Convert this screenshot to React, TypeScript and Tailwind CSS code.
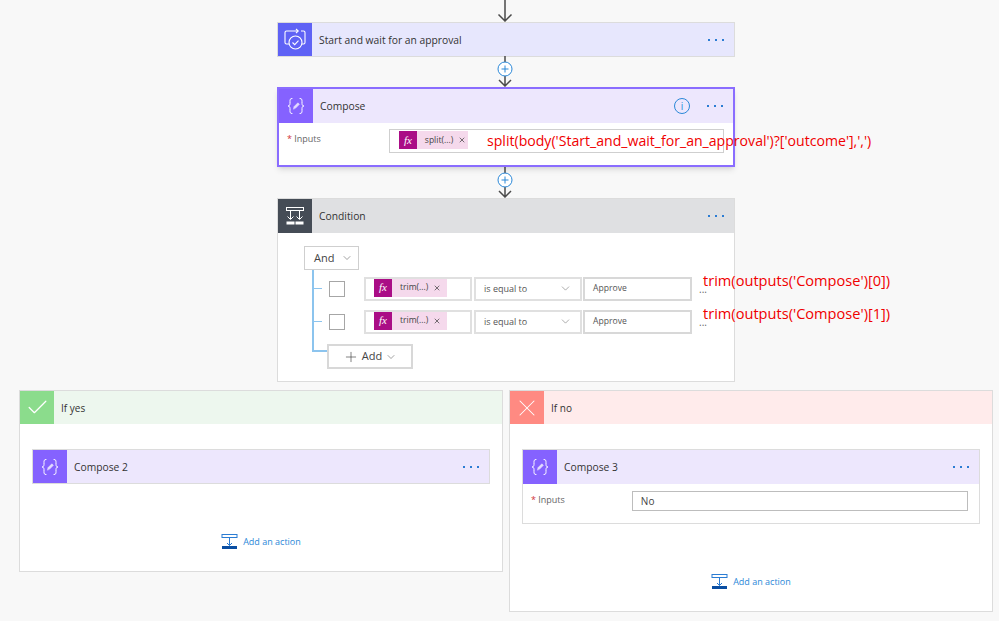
import type { ReactNode } from 'react';
import { Check, ChevronDown, Plus, X } from 'lucide-react';

// Small drawings used by the flow cards
function ComposeIcon() {
  return (
    <svg width="20" height="20" viewBox="0 0 20 20" fill="none" stroke="white" strokeWidth="1" strokeLinecap="round">
      <path d="M6 2.500c-2 0-2 1-2 3v2c0 1.500-.7 2.500-2 2.500 1.300 0 2 1 2 2.500v2c0 2 0 3 2 3" />
      <path d="M14 2.500c2 0 2 1 2 3v2c0 1.500.7 2.500 2 2.500-1.300 0-2 1-2 2.500v2c0 2 0 3-2 3" />
      <path d="M7.500 12.800l.6-2.200 3.800-3.800 1.500 1.500-3.800 3.800z" fill="#e4dcff" stroke="#e4dcff" strokeWidth=".6" />
    </svg>
  );
}

function ApprovalIcon() {
  return (
    <svg width="24" height="24" viewBox="0 0 24 24" fill="none" stroke="white" strokeWidth="1.100">
      <path d="M6 16H3.500A1.500 1.500 0 0 1 2 14.500v-10A1.500 1.500 0 0 1 3.500 3H15" />
      <path d="M13 1l2.200 2L13 5" />
      <path d="M18 3h2.500A1.500 1.500 0 0 1 22 4.500v10a1.500 1.500 0 0 1-1.500 1.500H19" />
      <circle cx="12.500" cy="14.500" r="6.500" />
      <path d="M9.500 14.500l2.200 2.200 3.800-4" />
    </svg>
  );
}

function ConditionIcon() {
  return (
    <svg width="20" height="20" viewBox="0 0 20 20" fill="none" stroke="white" strokeWidth="1">
      <rect x="1.500" y="1.500" width="17" height="3" />
      <path d="M5.500 4.500V13M14.500 4.500V13" />
      <path d="M2.500 10.500l3 3 3-3M11.500 10.500l3 3 3-3" />
      <path d="M1.500 15.500h8v3h-8zM10.500 15.500h8v3h-8z" fill="white" stroke="none" />
    </svg>
  );
}

function AddActionIcon() {
  return (
    <svg width="17" height="17" viewBox="0 0 17 17" fill="none">
      <rect x="1" y="1.500" width="15" height="3" stroke="#2b7cd3" />
      <path d="M8.500 4.500v8M6 10l2.500 2.500L11 10" stroke="#2b7cd3" />
      <rect x="1" y="13" width="15" height="3" fill="#0a4ea2" />
    </svg>
  );
}

function Arrow() {
  return (
    <svg width="16" height="22" viewBox="0 0 16 22" fill="none" stroke="#4a4a4a" strokeWidth="1.500">
      <path d="M8 0v21M1.500 14.500L8 21l6.500-6.500" />
    </svg>
  );
}

function Connector(props: { height: string }) {
  return (
    <div className={`flex justify-center items-end pr-[2px] ${props.height}`}>
      <svg width="18" height="31" viewBox="0 0 18 31" fill="none">
        <path d="M9 0v30M3 24l6 6 6-6" stroke="#4a4a4a" strokeWidth="1.500" />
        <circle cx="9" cy="13" r="7" fill="white" stroke="#2b88d8" />
        <path d="M5.500 13h7M9 9.500v7" stroke="#2b88d8" />
      </svg>
    </div>
  );
}

function Dots() {
  return (
    <div className="flex gap-[5px]">
      <span className="w-[2px] h-[2px] bg-[#2b7cd3]" />
      <span className="w-[2px] h-[2px] bg-[#2b7cd3]" />
      <span className="w-[2px] h-[2px] bg-[#2b7cd3]" />
    </div>
  );
}

function CardHeader(props: { icon: ReactNode; iconBg: string; bg: string; title: string; extra?: ReactNode }) {
  return (
    <div className={`flex items-center h-[34px] ${props.bg}`}>
      <div className={`flex items-center justify-center w-[34px] h-full shrink-0 ${props.iconBg}`}>{props.icon}</div>
      <span className="ml-[7px] mt-[2px] text-[10.300px] text-[#333] grow">{props.title}</span>
      {props.extra}
      <div className="mr-[10px] ml-[12px]">
        <Dots />
      </div>
    </div>
  );
}

function FxChip(props: { label: string; width: string }) {
  return (
    <div className={`flex items-center h-[18px] bg-[#f5d9ec] ${props.width}`}>
      <div className="flex items-center justify-center w-[18px] h-full bg-[#aa0d86] text-white text-[11px] italic font-['Liberation_Serif',serif]">
        fx
      </div>
      <span className="ml-2 text-[8.500px] text-[#444]">{props.label}</span>
      <X size={8} className="ml-[5px] text-[#333]" />
    </div>
  );
}

function ConditionRow(props: { note: string }) {
  return (
    <div className="relative flex items-center h-[25px]">
      <span className="w-[8px] h-[1px] bg-[#8cc4ee] ml-[2px]" />
      <span className="ml-[7px] w-[16px] h-[16px] bg-white border border-[#a6a6a6]" />
      <div className="ml-[19px] flex items-start w-[108px] h-[24px] pl-[8px] border-2 border-[#e0e0e0]">
        <FxChip label="trim(...)" width="w-[73px]" />
      </div>
      <div className="ml-[2px] flex items-center justify-between w-[108px] h-[24px] pl-2 pr-2 border-2 border-[#e0e0e0] text-[9px] text-[#555]">
        <span>is equal to</span>
        <ChevronDown size={13} strokeWidth={1} className="text-[#666]" />
      </div>
      <div className="ml-[1px] flex items-center w-[109px] h-[24px] pl-2 border-2 border-[#d8d8d8] text-[8.600px] text-[#555]">
        Approve
      </div>
      <span className="ml-[7px] text-[10px] leading-none text-[#666]">...</span>
      <span className="absolute left-[391px] -top-[6px] whitespace-nowrap text-[14.600px] font-medium text-[#f00000]">
        {props.note}
      </span>
    </div>
  );
}

function AddAction() {
  return (
    <div className="flex items-center justify-center">
      <AddActionIcon />
      <span className="ml-[5px] text-[9px] text-[#2b88d8]">Add an action</span>
    </div>
  );
}

function Branch(props: { height: string; bg: string; iconBg: string; icon: ReactNode; title: string; children: ReactNode }) {
  return (
    <div className={`bg-white border border-[#dcdcdc] w-[484px] ${props.height}`}>
      <div className={`flex items-center h-[33px] ${props.bg}`}>
        <div className={`flex items-center justify-center w-[34px] h-full ${props.iconBg}`}>{props.icon}</div>
        <span className="ml-[7px] mt-[2px] text-[10px] text-[#333]">{props.title}</span>
      </div>
      {props.children}
    </div>
  );
}

export default function App() {
  return (
    <div className="w-[999px] h-[621px] overflow-hidden bg-[#f8f8f8] font-['Open_Sans',sans-serif]">
      <div className="w-[458px] ml-[277px]">
        <div className="flex justify-center pr-[2px] h-[22px]">
          <Arrow />
        </div>

        <div className="h-[35px] overflow-hidden border border-[#dcdcdc]">
          <CardHeader icon={<ApprovalIcon />} iconBg="bg-[#5f62f5]" bg="bg-[#e7e7fd]" title="Start and wait for an approval" />
        </div>
        <Connector height="h-[30px]" />

        <div className="relative h-[80px] bg-white border-2 border-[#8a6dff] shadow-md">
          <CardHeader
            icon={<ComposeIcon />}
            iconBg="bg-[#8562ff]"
            bg="bg-[#ede7fd]"
            title="Compose"
            extra={
              <div className="flex items-center justify-center w-[16px] h-[16px] mr-[5px] rounded-full border border-[#2b88d8] text-[10px] leading-none text-[#2b88d8]">
                i
              </div>
            }
          />
          <div className="flex items-start pt-[6px]">
            <span className="ml-[8px] mt-[3px] text-[9px] text-[#666]">
              <span className="text-[#d13438]">* </span>Inputs
            </span>
            <div className="ml-[68px] flex items-start w-[335px] h-[24px] pl-[9px] pt-[1px] border border-[#cfcfcf]">
              <FxChip label="split(...)" width="w-[69px]" />
            </div>
          </div>
          <span className="absolute left-[208px] top-[41px] whitespace-nowrap text-[14.100px] font-medium text-[#f00000]">
            split(body('Start_and_wait_for_an_approval')?['outcome'],',')
          </span>
        </div>
        <Connector height="h-[31px]" />

        <div className="h-[184px] bg-white border border-[#dcdcdc]">
          <CardHeader icon={<ConditionIcon />} iconBg="bg-[#454c56]" bg="bg-[#dfe0e2]" title="Condition" />
          <div className="pl-[26px] pt-[13px]">
            <div className="flex items-center gap-[7px] pl-[9px] w-[55px] h-[24px] border border-[#cfcfcf] text-[11px] text-[#444]">
              And
              <ChevronDown size={12} strokeWidth={1} />
            </div>
            <div className="ml-[8px] w-[16px] h-[82px] -mb-[82px] border-l-2 border-b-2 border-[#8cc4ee]" />
            <div className="ml-[8px] mt-[6px] flex flex-col gap-[8px]">
              <ConditionRow note="trim(outputs('Compose')[0])" />
              <ConditionRow note="trim(outputs('Compose')[1])" />
            </div>
            <div className="relative flex items-center justify-center gap-[3px] ml-[23px] mt-[10px] w-[86px] h-[25px] bg-white border-2 border-[#d8d8d8] text-[11px] font-medium text-[#444]">
              <Plus size={16} strokeWidth={1} />
              Add
              <ChevronDown size={12} strokeWidth={1} />
            </div>
          </div>
        </div>
      </div>

      <div className="flex items-start gap-[6px] ml-[19px] mt-[8px]">
        <Branch
          height="h-[182px]"
          bg="bg-[#edf7ee]"
          iconBg="bg-[#8bdc8c]"
          icon={<Check size={25} strokeWidth={1.200} color="white" />}
          title="If yes"
        >
          <div className="mx-[12px] mt-[25px] h-[35px] overflow-hidden border border-[#dcdcdc]">
            <CardHeader icon={<ComposeIcon />} iconBg="bg-[#8562ff]" bg="bg-[#ede7fd]" title="Compose 2" />
          </div>
          <div className="mt-[49px]">
            <AddAction />
          </div>
        </Branch>
        <Branch
          height="h-[222px]"
          bg="bg-[#ffebeb]"
          iconBg="bg-[#ff8a82]"
          icon={<X size={28} strokeWidth={0.900} color="white" />}
          title="If no"
        >
          <div className="mx-[12px] mt-[25px] h-[75px] bg-white border border-[#dcdcdc]">
            <CardHeader icon={<ComposeIcon />} iconBg="bg-[#8562ff]" bg="bg-[#ede7fd]" title="Compose 3" />
            <div className="flex items-start pt-[7px]">
              <span className="ml-[8px] mt-[2px] text-[9px] text-[#666]">
                <span className="text-[#d13438]">* </span>Inputs
              </span>
              <div className="ml-[67px] flex items-center w-[336px] h-[20px] pl-2 border border-[#bdbdbd] text-[10px] text-[#444]">
                No
              </div>
            </div>
          </div>
          <div className="mt-[49px]">
            <AddAction />
          </div>
        </Branch>
      </div>
    </div>
  );
}
